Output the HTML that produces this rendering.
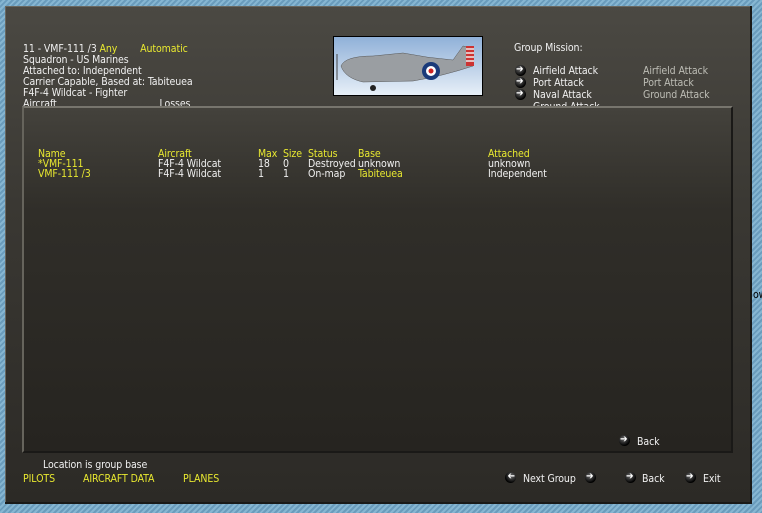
<!DOCTYPE html>
<html><head><style>
body{margin:0;width:762px;height:513px;overflow:hidden;background:repeating-linear-gradient(135deg,#6a9cbc 0 2px,#86b6d2 2px 4px);font-family:"DejaVu Sans Condensed","Liberation Sans",sans-serif;font-size:10.5px;color:#f0f0f0;position:relative;letter-spacing:-0.1px}
.main{position:absolute;left:5px;top:6px;width:747px;height:498px;background:linear-gradient(#4b4943,#3a3833 40%,#2c2a26);box-shadow:inset -2px -2px 0 #1a1a18,inset 1px 1px 0 #6a6860}
.inner{position:absolute;left:22px;top:106px;width:711px;height:347px;background:linear-gradient(#44423c,#302e29 30%,#262420);border-top:2px solid #77756d;border-left:2px solid #66645c;border-right:2px solid #1a1917;border-bottom:2px solid #1a1917;box-sizing:border-box}
.t{position:absolute;white-space:nowrap;line-height:11px}
.y{color:#e8e830}
.g{color:#bdbdb5}
.ar{position:absolute;width:11px;height:11px;border-radius:50%;background:radial-gradient(circle at 40% 35%,#666 0,#000 70%)}
.ar:after{content:"➔";position:absolute;left:1px;top:-1px;font-size:10px;color:#fff}
</style></head><body>
<div class="main"></div>
<div class="t" style="left:23px;top:44px">11 - VMF-111 /3 <span class="y">Any</span> <span class="y" style="margin-left:20px">Automatic</span></div>
<div class="t" style="left:23px;top:55px">Squadron - US Marines</div>
<div class="t" style="left:23px;top:66px">Attached to: Independent</div>
<div class="t" style="left:23px;top:77px">Carrier Capable, Based at:  Tabiteuea</div>
<div class="t" style="left:23px;top:88px">F4F-4 Wildcat - Fighter</div>
<div class="t" style="left:23px;top:99px;height:7px;overflow:hidden">Aircraft <span style="margin-left:100px">Losses</span></div>
<svg style="position:absolute;left:333px;top:36px" width="150" height="60">
<defs><linearGradient id="s" x1="0" y1="0" x2="0" y2="1"><stop offset="0" stop-color="#8fb0d8"/><stop offset="1" stop-color="#e8f0f8"/></linearGradient></defs>
<rect x="0.5" y="0.5" width="149" height="59" fill="url(#s)" stroke="#000"/>
<path d="M8 30 Q12 20 40 20 L70 17 Q95 22 120 24 L130 10 L140 12 L140 30 Q110 40 80 45 L30 46 Q12 42 8 30Z" fill="#9a9ea2" stroke="#555" stroke-width=".5"/>
<rect x="133" y="10" width="8" height="20" fill="#c33"/>
<path d="M133 13h8M133 17h8M133 21h8M133 25h8" stroke="#eee" stroke-width="1.5"/>
<circle cx="98" cy="35" r="9" fill="#1a3a7a"/><circle cx="98" cy="35" r="5" fill="#fff"/><circle cx="98" cy="35" r="2.5" fill="#c22"/>
<line x1="4" y1="18" x2="4" y2="44" stroke="#444"/><circle cx="40" cy="52" r="3" fill="#222"/>
</svg>
<div class="t" style="left:514px;top:43px">Group Mission:</div>
<div class="ar" style="left:515px;top:65px"></div><div class="t" style="left:533px;top:66px">Airfield Attack</div><div class="t g" style="left:643px;top:66px">Airfield Attack</div>
<div class="ar" style="left:515px;top:77px"></div><div class="t" style="left:533px;top:78px">Port Attack</div><div class="t g" style="left:643px;top:78px">Port Attack</div>
<div class="ar" style="left:515px;top:89px"></div><div class="t" style="left:533px;top:90px">Naval Attack</div><div class="t g" style="left:643px;top:90px">Ground Attack</div>
<div class="t" style="left:533px;top:102px;height:4px;overflow:hidden">Ground Attack</div>
<div class="inner"></div>
<div class="t y" style="left:38px;top:149px">Name</div><div class="t y" style="left:158px;top:149px">Aircraft</div><div class="t y" style="left:258px;top:149px">Max</div><div class="t y" style="left:283px;top:149px">Size</div><div class="t y" style="left:308px;top:149px">Status</div><div class="t y" style="left:358px;top:149px">Base</div><div class="t y" style="left:488px;top:149px">Attached</div>
<div class="t y" style="left:38px;top:159px">*VMF-111</div><div class="t" style="left:158px;top:159px">F4F-4 Wildcat</div><div class="t" style="left:258px;top:159px">18</div><div class="t" style="left:283px;top:159px">0</div><div class="t" style="left:308px;top:159px">Destroyed</div><div class="t" style="left:358px;top:159px">unknown</div><div class="t" style="left:488px;top:159px">unknown</div>
<div class="t y" style="left:38px;top:169px">VMF-111 /3</div><div class="t" style="left:158px;top:169px">F4F-4 Wildcat</div><div class="t" style="left:258px;top:169px">1</div><div class="t" style="left:283px;top:169px">1</div><div class="t" style="left:308px;top:169px">On-map</div><div class="t y" style="left:358px;top:169px">Tabiteuea</div><div class="t" style="left:488px;top:169px">Independent</div>
<div class="ar" style="left:619px;top:435px"></div><div class="t" style="left:637px;top:437px">Back</div>
<div class="t" style="left:43px;top:460px">Location is group base</div>
<div class="t y" style="left:23px;top:474px">PILOTS</div><div class="t y" style="left:83px;top:474px">AIRCRAFT DATA</div><div class="t y" style="left:183px;top:474px">PLANES</div>
<div class="ar" style="left:505px;top:472px;transform:scaleX(-1)"></div><div class="t" style="left:523px;top:474px">Next Group</div><div class="ar" style="left:585px;top:472px"></div>
<div class="ar" style="left:625px;top:472px"></div><div class="t" style="left:642px;top:474px">Back</div>
<div class="ar" style="left:685px;top:472px"></div><div class="t" style="left:703px;top:474px">Exit</div>
<div class="t" style="left:753px;top:290px;color:#000">ow</div>
</body></html>
